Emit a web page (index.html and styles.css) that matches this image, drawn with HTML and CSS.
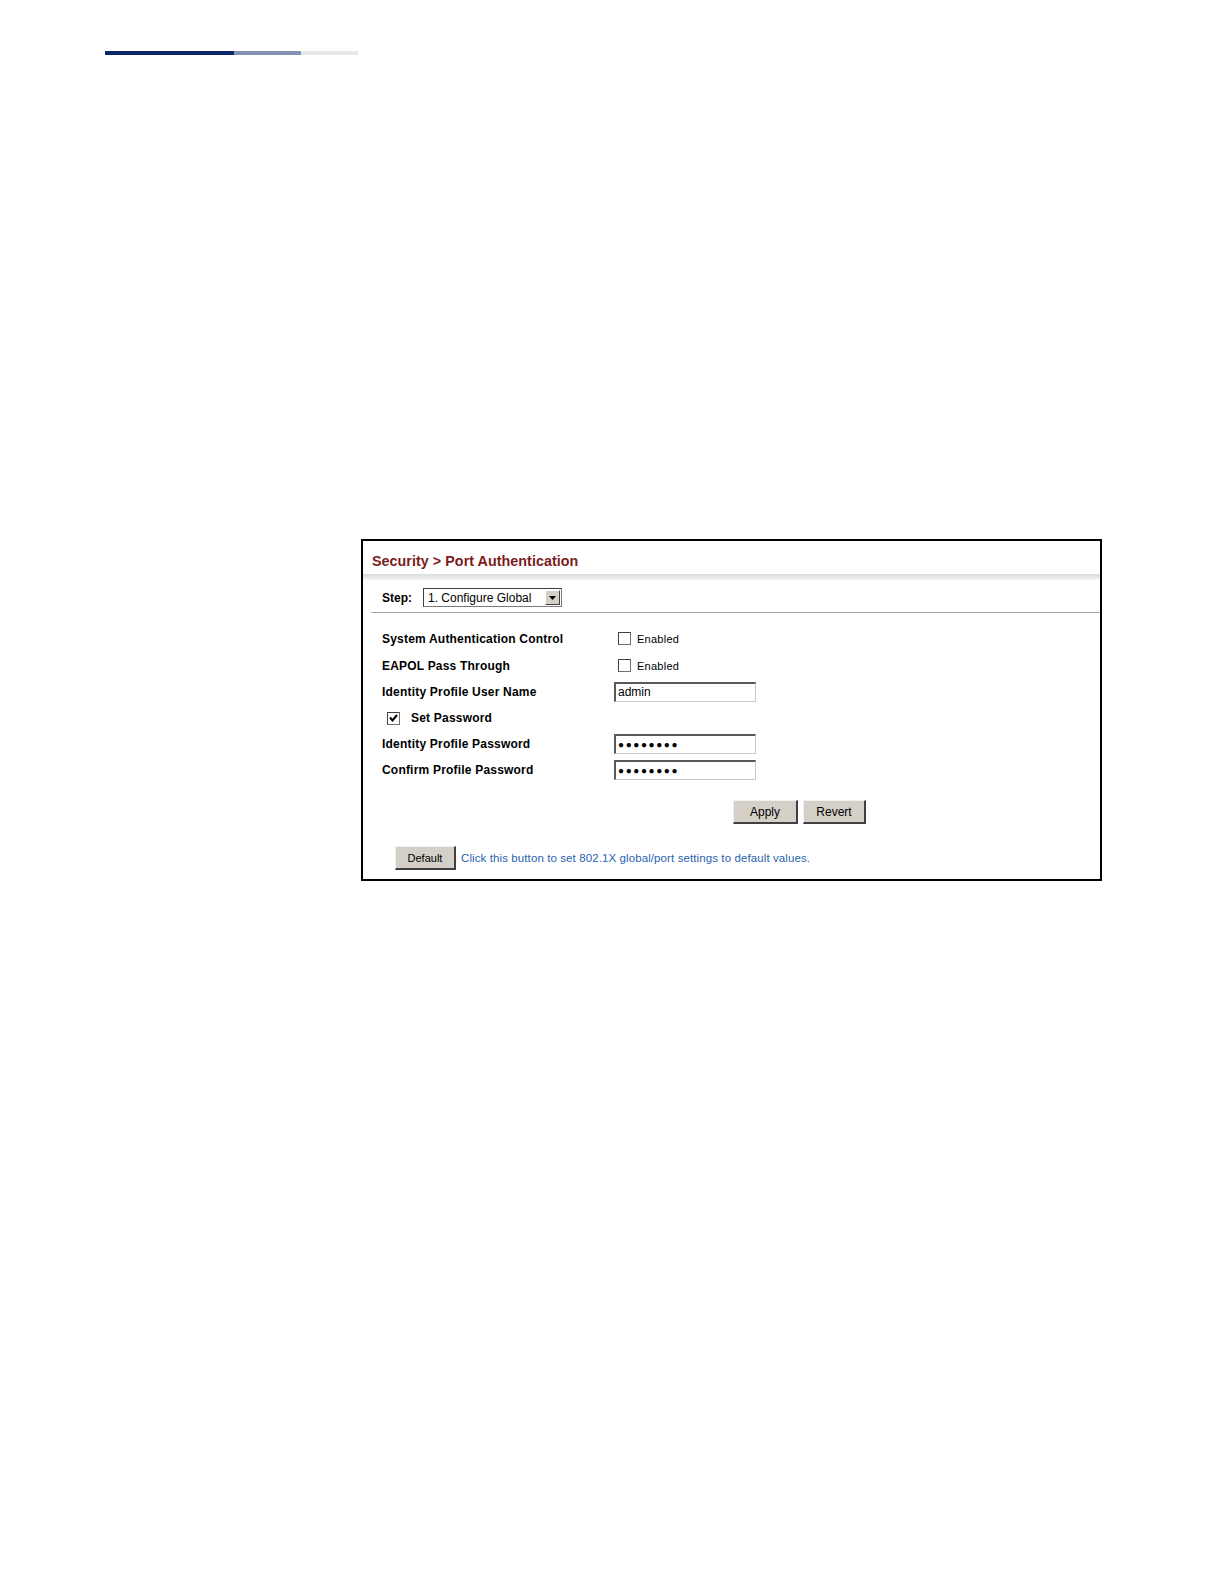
FILE: index.html
```html
<!DOCTYPE html>
<html>
<head>
<meta charset="utf-8">
<link rel="stylesheet" href="styles.css">
</head>
<body>
<div class="topbar"><span class="seg1"></span><span class="seg2"></span><span class="seg3"></span></div>
<div class="panel">
  <div class="title">Security &gt; Port Authentication</div>
  <div class="band"></div>
  <div class="steprow">
    <span class="steplabel">Step:</span>
    <div class="select"><span class="seltext">1. Configure Global</span><span class="selbtn"><svg width="7" height="4" viewBox="0 0 7 4"><path d="M0 0H7L3.5 4Z" fill="#000"/></svg></span></div>
  </div>
  <div class="rule"></div>
  <div class="form">
    <div class="row tall"><span class="label">System Authentication Control</span><span class="cb"></span><span class="cbtext">Enabled</span></div>
    <div class="row tall"><span class="label">EAPOL Pass Through</span><span class="cb"></span><span class="cbtext">Enabled</span></div>
    <div class="row"><span class="label">Identity Profile User Name</span><span class="input">admin</span></div>
    <div class="row setpw"><span class="cb checked"><svg width="9" height="8" viewBox="0 0 9 8"><path d="M1 3.5L3.5 6.5L8 1" fill="none" stroke="#000" stroke-width="2"/></svg></span><span class="label">Set Password</span></div>
    <div class="row"><span class="label">Identity Profile Password</span><span class="input dots">●●●●●●●●</span></div>
    <div class="row"><span class="label">Confirm Profile Password</span><span class="input dots">●●●●●●●●</span></div>
  </div>
  <div class="actions"><span class="btn apply">Apply</span><span class="btn revert">Revert</span></div>
  <div class="defaultrow"><span class="btn default">Default</span><span class="hint">Click this button to set 802.1X global/port settings to default values.</span></div>
</div>
</body>
</html>
```
FILE: styles.css
```css
html, body { margin: 0; padding: 0; background: #fff; }
body { font-family: "Liberation Sans", Arial, sans-serif; color: #000; }
.topbar { display: flex; margin: 51px 0 0 105px; height: 4px; }
.seg1 { width: 129px; background: #0c2766; }
.seg2 { width: 67px; background: #8591b0; }
.seg3 { width: 57px; background: #e7e8ec; }
.panel { margin: 484px 0 0 361px; width: 737px; height: 338px; border: 2px solid #000; }
.title { height: 33px; padding-left: 9px; box-sizing: border-box; padding-top: 12px; font-size: 14.3px; font-weight: bold; color: #7b1c1c; line-height: 16px; letter-spacing: 0.05px; }
.band { height: 6px; background: linear-gradient(#dcdcdc, #f4f4f4); }
.steprow { display: flex; align-items: center; height: 32px; box-sizing: border-box; padding: 3px 0 0 19px; }
.steplabel { font-size: 12px; font-weight: bold; width: 41px; }
.select { display: flex; width: 137px; height: 17px; border: 1px solid #7a7a7a; border-top-color: #404040; border-left-color: #404040; align-items: center; }
.seltext { flex: 1; font-size: 12px; padding-left: 4px; }
.selbtn { width: 15px; height: 15px; background: #d4d0c8; border: 1px solid #fff; border-right-color: #404040; border-bottom-color: #404040; box-sizing: border-box; display: flex; align-items: center; justify-content: center; margin-right: 1px; }
.rule { height: 1px; background: #a8a8a8; margin-left: 8px; }
.form { padding: 12px 0 0 19px; }
.row { display: flex; align-items: center; height: 26px; }
.row.tall { height: 27px; }
.label { width: 232px; font-size: 12px; font-weight: bold; letter-spacing: 0.2px; }
.cb { width: 11px; height: 11px; border: 1px solid #707070; border-top-color: #404040; border-left-color: #404040; background: #fff; margin-left: 4px; margin-right: 6px; display: flex; align-items: center; justify-content: center; }
.cbtext { font-size: 11px; letter-spacing: 0.25px; }
.input { width: 137px; height: 17px; border: 1px solid #c8c8c8; border-top: 2px solid #5a5a5a; border-left: 2px solid #5a5a5a; font-size: 12px; line-height: 17px; padding-left: 2px; box-sizing: content-box; }
.input.dots { font-size: 10px; letter-spacing: 1.6px; }
.setpw .cb { margin-left: 5px; margin-right: 11px; }
.actions { display: flex; padding-left: 370px; margin-top: 17px; gap: 5px; }
.btn { display: flex; align-items: center; justify-content: center; height: 21px; background: #d4d0c8; border: 1px solid #f0f0f0; border-right: 2px solid #404040; border-bottom: 2px solid #404040; font-size: 12px; }
.apply { width: 62px; }
.revert { width: 60px; }
.defaultrow { display: flex; align-items: center; margin-top: 22px; padding-left: 32px; }
.default { width: 58px; font-size: 11px; }
.hint { font-size: 11.5px; color: #2a62b0; margin-left: 5px; letter-spacing: 0.1px; }
```
